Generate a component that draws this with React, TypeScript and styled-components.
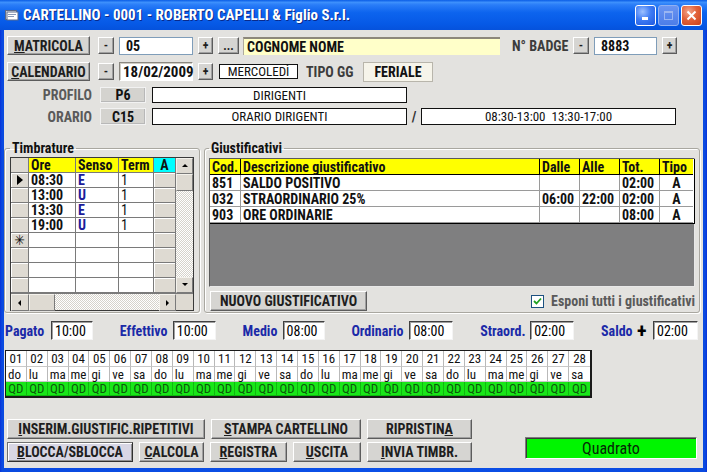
import React from "react";
import styled, { createGlobalStyle } from "styled-components";

const FONT = `"Roboto Condensed", "Liberation Sans Narrow", "Arial Narrow", "DejaVu Sans Condensed", "Liberation Sans", Arial, sans-serif`;

const GlobalStyle = createGlobalStyle`
  * { box-sizing: border-box; }
  html, body { margin: 0; padding: 0; }
  body { font-family: ${FONT}; background: #ffffff; }
`;

const Window = styled.div`
  width: 707px;
  height: 472px;
  display: flex;
  flex-direction: column;
  background: linear-gradient(90deg, #0831d9 0, #0a4ae0 2px, #0b50e8 50%, #0a4ae0 calc(100% - 2px), #0831d9 100%);
  overflow: hidden;
`;

const TitleBar = styled.div`
  height: 30px;
  flex-shrink: 0;
  display: flex;
  align-items: center;
  padding: 0 5px 0 5px;
  background: linear-gradient(180deg, #0a5de6 0%, #3d90fc 8%, #2a7df8 16%, #0d64ee 42%, #0659e6 80%, #0552dc 100%);
`;

const TitleText = styled.div`
  flex: 1;
  margin-left: 4px;
  color: #ffffff;
  font-weight: bold;
  font-size: 15px;
  text-shadow: 1px 1px 0 #0a2a8a;
  white-space: nowrap;
`;

const Controls = styled.div`
  display: flex;
  gap: 2px;
  margin-top: 1px;
`;

const CtrlBtn = styled.div<{ $kind: "min" | "max" | "close" }>`
  width: 21px;
  height: 21px;
  border-radius: 3px;
  border: 1px solid ${(p) => (p.$kind === "max" ? "#8fb0f3" : "#ffffff")};
  display: flex;
  align-items: center;
  justify-content: center;
  background: ${(p) =>
    p.$kind === "close"
      ? "radial-gradient(circle at 35% 30%, #f2a58c 0%, #e2623a 45%, #c8401c 100%)"
      : p.$kind === "max"
      ? "linear-gradient(180deg, #6b95f2 0%, #4c7de8 100%)"
      : "radial-gradient(circle at 35% 30%, #9cc0ff 0%, #3f7cf4 45%, #1c58e0 100%)"};
`;

const Body = styled.div`
  flex: 1;
  margin: 0 4px 4px 4px;
  background: #e3e2df;
  display: flex;
  flex-direction: column;
  padding-top: 6px;
`;

const Top = styled.div`
  display: flex;
  flex-direction: column;
  padding-left: 3px;
`;

const Row = styled.div<{ $h: number; $mt?: number }>`
  display: flex;
  align-items: center;
  height: ${(p) => p.$h}px;
  margin-top: ${(p) => p.$mt ?? 0}px;
`;

const Gap = styled.span<{ $w: number }>`
  width: ${(p) => p.$w}px;
  flex-shrink: 0;
`;

const Btn = styled.button<{ $w: number; $h?: number; $focus?: boolean }>`
  width: ${(p) => p.$w}px;
  height: ${(p) => p.$h ?? 20}px;
  flex-shrink: 0;
  margin: 0;
  padding: 0;
  font-family: ${FONT};
  font-weight: bold;
  font-size: 14px;
  color: #1e1e1e;
  background: ${(p) => (p.$focus ? "#d8d6e4" : "#d6d5d2")};
  border: 1px solid;
  border-color: ${(p) => (p.$focus ? "#707070 #303030 #303030 #707070" : "#ffffff #5c5c5c #5c5c5c #ffffff")};
  box-shadow: ${(p) => (p.$focus ? "inset 1px 1px #ffffff, inset -1px -1px #909090" : "inset -1px -1px #a0a0a0")};
  display: flex;
  align-items: center;
  justify-content: center;
  white-space: nowrap;
  u { text-decoration: underline; text-underline-offset: 1px; }
`;

const SmallBtn = styled(Btn)`
  font-size: 12px;
`;

const XPInput = styled.div<{ $w: number; $h?: number }>`
  width: ${(p) => p.$w}px;
  height: ${(p) => p.$h ?? 18}px;
  flex-shrink: 0;
  background: #ffffff;
  border: 1px solid #7f9db9;
  font-weight: bold;
  font-size: 14px;
  color: #111;
  padding-left: 6px;
  display: flex;
  align-items: center;
`;

const SunkenInput = styled(XPInput)`
  border: 1px solid;
  border-color: #8a8780 #ffffff #ffffff #8a8780;
  box-shadow: inset 1px 1px #d0cdc5;
  padding-left: 3px;
  font-size: 15px;
`;

const NameField = styled.div`
  width: 257px;
  height: 18px;
  flex-shrink: 0;
  background: #ffffc9;
  border-top: 2px solid #8c877b;
  border-left: 1px solid #b0ab9e;
  font-weight: bold;
  font-size: 14px;
  color: #111;
  padding-left: 3px;
  display: flex;
  align-items: center;
`;

const FieldLabel = styled.span<{ $w: number }>`
  width: ${(p) => p.$w}px;
  flex-shrink: 0;
  font-weight: bold;
  font-size: 14px;
  color: #3c3c3c;
  white-space: nowrap;
`;

const PlainBox = styled.div<{ $w: number; $h: number }>`
  width: ${(p) => p.$w}px;
  height: ${(p) => p.$h}px;
  flex-shrink: 0;
  background: #ffffff;
  border: 1px solid #111;
  font-size: 13px;
  color: #111;
  display: flex;
  align-items: center;
  justify-content: center;
  white-space: nowrap;
`;

const TypeBox = styled.div`
  width: 70px;
  height: 20px;
  flex-shrink: 0;
  background: #f6f4ea;
  border: 1px solid #b8b5ab;
  font-weight: bold;
  font-size: 14px;
  color: #111;
  display: flex;
  align-items: center;
  justify-content: center;
`;

const SideLabel = styled.span`
  width: 89px;
  flex-shrink: 0;
  text-align: right;
  padding-right: 4px;
  font-weight: bold;
  font-size: 14px;
  color: #5a5a5a;
`;

const CodeBox = styled.div`
  width: 46px;
  height: 100%;
  flex-shrink: 0;
  background: #d4d3cf;
  border: 1px solid #f2f2f2;
  box-shadow: inset -1px -1px #b8b8b8;
  font-weight: bold;
  font-size: 14px;
  color: #111;
  display: flex;
  align-items: center;
  justify-content: center;
`;

const Slash = styled.span`
  width: 14px;
  flex-shrink: 0;
  text-align: center;
  font-weight: bold;
  font-size: 14px;
  color: #333;
`;

/* ---------- group boxes ---------- */
const GroupRow = styled.div`
  display: flex;
  gap: 4px;
  margin-top: 17px;
  height: 171px;
`;

const Group = styled.fieldset<{ $w: number; $pl: number; $pt: number }>`
  width: ${(p) => p.$w}px;
  height: 171px;
  margin: 0;
  padding: ${(p) => p.$pt}px 0 0 ${(p) => p.$pl}px;
  border: 1px solid #a9a7a0;
  border-radius: 3px;
  box-shadow: inset 1px 1px #ffffff, 1px 1px #ffffff;
  min-width: 0;
`;

const Legend = styled.legend`
  padding: 0 2px;
  font-weight: bold;
  font-size: 14px;
  line-height: 13px;
  color: #111;
`;

/* Timbrature grid */
const TGrid = styled.div`
  width: 184px;
  height: 154px;
  border: 1px solid #3a3a3a;
  display: flex;
  flex-direction: column;
  background: #ffffff;
`;

const TMain = styled.div`
  display: flex;
  height: 135px;
`;

const TTable = styled.div`
  display: grid;
  grid-template-columns: 18px 47px 43px 35px 22px;
  grid-auto-rows: 15px;
  width: 165px;
`;

const TCell = styled.div<{ $kind: "corner" | "rowhead" | "head" | "headA" | "data" | "btn" }>`
  border-right: 1px solid #7a7a7a;
  border-bottom: 1px solid #7a7a7a;
  display: flex;
  align-items: center;
  justify-content: ${(p) => (p.$kind === "rowhead" || p.$kind === "headA" ? "center" : "flex-start")};
  padding-left: ${(p) => (p.$kind === "data" || p.$kind === "head" ? "2px" : "0")};
  font-size: 14px;
  font-weight: bold;
  color: #111;
  background: ${(p) =>
    p.$kind === "head"
      ? "#ffff00"
      : p.$kind === "headA"
      ? "#00ffff"
      : p.$kind === "corner" || p.$kind === "rowhead" || p.$kind === "btn"
      ? "#dedad2"
      : "#ffffff"};
  box-shadow: ${(p) => (p.$kind === "rowhead" || p.$kind === "btn" ? "inset 1px 1px #ffffff" : "none")};
  line-height: 13px;
  white-space: nowrap;
`;

const Senso = styled.span`
  color: #1c1c9a;
`;

const Plain = styled.span`
  font-weight: normal;
`;

const Track = styled.div`
  background: repeating-conic-gradient(#d6d3cb 0 25%, #ffffff 0 50%) 0 0 / 2px 2px;
`;

const VScroll = styled(Track)`
  width: 17px;
  display: flex;
  flex-direction: column;
`;

const HScrollRow = styled.div`
  display: flex;
  height: 17px;
  border-top: 1px solid #7a7a7a;
`;

const HScroll = styled(Track)`
  flex: 1;
  display: flex;
`;

const ScrollPart = styled.div<{ $w: number; $h: number }>`
  width: ${(p) => p.$w}px;
  height: ${(p) => p.$h}px;
  flex-shrink: 0;
  background: #dedad2;
  border: 1px solid;
  border-color: #f4f2ec #7a7a7a #7a7a7a #f4f2ec;
  display: flex;
  align-items: center;
  justify-content: center;
`;

const ScrollFill = styled.div`
  flex: 1;
`;

const Corner = styled.div`
  width: 17px;
  background: #dedad2;
`;

/* Giustificativi */
const JBox = styled.div`
  width: 486px;
  height: 129px;
  background: #7f7f80;
  border: 1px solid;
  border-color: #5a5a5a #e8e8e8 #e8e8e8 #5a5a5a;
`;

const JTable = styled.div`
  display: grid;
  grid-template-columns: 31px 299px 40px 40px 40px 33px;
  grid-auto-rows: 16px;
  width: 485px;
  border: 1px solid #000;
  border-top: none;
  border-left: none;
  background: #ffffff;
`;

const JCell = styled.div<{ $head?: boolean; $center?: boolean }>`
  border-right: 1px solid ${(p) => (p.$head ? "#000" : "#9a9a9a")};
  border-bottom: 1px solid ${(p) => (p.$head ? "#000" : "#9a9a9a")};
  background: ${(p) => (p.$head ? "#ffff00" : "#ffffff")};
  font-weight: bold;
  font-size: 14px;
  line-height: 14px;
  color: #111;
  display: flex;
  align-items: center;
  justify-content: ${(p) => (p.$center ? "center" : "flex-start")};
  padding-left: ${(p) => (p.$center ? "0" : "2px")};
  white-space: nowrap;
  &:nth-child(6n) { border-right: none; }
`;

const JBar = styled.div`
  display: flex;
  align-items: center;
  justify-content: space-between;
  margin-top: 4px;
  width: 486px;
  padding-left: 1px;
`;

const CheckWrap = styled.div`
  display: flex;
  align-items: center;
  gap: 7px;
  font-weight: bold;
  font-size: 14px;
  color: #5a5a5a;
`;

const CheckBox = styled.span`
  width: 13px;
  height: 13px;
  background: #ffffff;
  border: 1px solid #1c5180;
  display: flex;
  align-items: center;
  justify-content: center;
`;

/* Totals */
const TotalsRow = styled.div`
  display: flex;
  justify-content: space-between;
  align-items: center;
  height: 19px;
  margin-top: 8px;
  padding: 0 5px 0 1px;
`;

const TotalGroup = styled.div<{ $w: number }>`
  width: ${(p) => p.$w}px;
  display: flex;
  align-items: center;
  justify-content: space-between;
`;

const TotalLabel = styled.span`
  font-weight: bold;
  font-size: 14px;
  color: #1b2aa8;
  white-space: nowrap;
`;

const PlusSign = styled.span`
  font-weight: bold;
  font-size: 20px;
  line-height: 16px;
  color: #000;
  margin: 0 4px 0 2px;
`;

const TotalInput = styled.div<{ $w: number }>`
  width: ${(p) => p.$w}px;
  height: 19px;
  background: #ffffff;
  border: 1px solid;
  border-color: #404040 #f4f4f4 #f4f4f4 #404040;
  box-shadow: inset 1px 1px #a0a0a0;
  font-size: 14px;
  color: #000;
  padding-left: 3px;
  display: flex;
  align-items: center;
`;

/* Calendar */
const Calendar = styled.div`
  width: 587px;
  height: 48px;
  margin: 10px 0 0 1px;
  border: 2px solid #1a1a1a;
  border-top-width: 1px;
  border-left-width: 1px;
  display: grid;
  grid-template-columns: repeat(28, 1fr);
  grid-template-rows: 16px 15px 1fr;
`;

const CalCell = styled.div<{ $row: "num" | "day" | "qd" }>`
  font-size: 13px;
  line-height: 1;
  display: flex;
  align-items: center;
  justify-content: ${(p) => (p.$row === "day" ? "flex-start" : "center")};
  padding-left: ${(p) => (p.$row === "day" ? "2px" : "0")};
  color: ${(p) => (p.$row === "qd" ? "#0b5a0b" : "#111")};
  background: ${(p) => (p.$row === "qd" ? "#19e619" : "#ffffff")};
  border-right: 1px solid ${(p) => (p.$row === "qd" ? "#0fb80f" : "#b9b9b9")};
  border-bottom: 1px solid ${(p) => (p.$row === "qd" ? "#0fb80f" : "#c9c9c9")};
  &:nth-child(28n) { border-right: none; }
`;

/* Bottom */
const Bottom = styled.div`
  display: flex;
  margin-top: 21px;
  padding-left: 3px;
`;

const BtnRows = styled.div`
  display: flex;
  flex-direction: column;
  gap: 3px;
`;

const BtnRow = styled.div`
  display: flex;
  gap: 6px;
`;

const Status = styled.div`
  width: 172px;
  height: 22px;
  margin: 18px 0 0 53px;
  background: #00f500;
  border: 1px solid;
  border-color: #7c7c7c #ffffff #ffffff #7c7c7c;
  box-shadow: inset 1px 1px #3a3a3a;
  font-size: 16px;
  color: #062806;
  display: flex;
  align-items: center;
  justify-content: center;
`;

const Arrow: React.FC<{ dir: "up" | "down" | "left" | "right" }> = ({ dir }) => {
  const pts =
    dir === "up"
      ? "1,5 4,2 7,5"
      : dir === "down"
      ? "1,2 4,5 7,2"
      : dir === "left"
      ? "5,1 2,4 5,7"
      : "2,1 5,4 2,7";
  return (
    <svg width="8" height="8" viewBox="0 0 8 8">
      <polygon points={pts} fill="#000" />
    </svg>
  );
};

const tRows = [
  { ind: "▶", ore: "08:30", senso: "E", term: "1" },
  { ind: "", ore: "13:00", senso: "U", term: "1" },
  { ind: "", ore: "13:30", senso: "E", term: "1" },
  { ind: "", ore: "19:00", senso: "U", term: "1" },
  { ind: "*", ore: "", senso: "", term: "" },
  { ind: "", ore: "", senso: "", term: "" },
  { ind: "", ore: "", senso: "", term: "" },
  { ind: "", ore: "", senso: "", term: "" },
];

const jRows = [
  ["851", "SALDO POSITIVO", "", "", "02:00", "A"],
  ["032", "STRAORDINARIO 25%", "06:00", "22:00", "02:00", "A"],
  ["903", "ORE ORDINARIE", "", "", "08:00", "A"],
];

const days = ["do", "lu", "ma", "me", "gi", "ve", "sa"];
const cal = Array.from({ length: 28 }, (_, i) => ({
  n: String(i + 1).padStart(2, "0"),
  d: days[i % 7],
}));

export default function App() {
  return (
    <>
      <GlobalStyle />
      <Window>
        <TitleBar>
          <svg width="14" height="12" viewBox="0 0 14 12">
            <rect x="0.5" y="1.5" width="11" height="9" fill="#e8e8e8" stroke="#5a6a8a" />
            <rect x="2" y="3" width="11" height="8" fill="#ffffff" stroke="#5a6a8a" />
            <rect x="3" y="5" width="8" height="1" fill="#8a9ab8" />
            <rect x="3" y="7" width="6" height="1" fill="#8a9ab8" />
          </svg>
          <TitleText>CARTELLINO - 0001 - ROBERTO CAPELLI &amp; Figlio S.r.l.</TitleText>
          <Controls>
            <CtrlBtn $kind="min">
              <svg width="11" height="11" viewBox="0 0 11 11">
                <rect x="2" y="7" width="6" height="3" fill="#fff" />
              </svg>
            </CtrlBtn>
            <CtrlBtn $kind="max">
              <svg width="11" height="11" viewBox="0 0 11 11">
                <rect x="1.5" y="1.5" width="8" height="8" fill="none" stroke="#9ab6f2" />
                <rect x="1" y="1" width="9" height="2" fill="#9ab6f2" />
              </svg>
            </CtrlBtn>
            <CtrlBtn $kind="close">
              <svg width="11" height="11" viewBox="0 0 11 11">
                <path d="M1.5 1.5 L9.5 9.5 M9.5 1.5 L1.5 9.5" stroke="#fff" strokeWidth="2" />
              </svg>
            </CtrlBtn>
          </Controls>
        </TitleBar>

        <Body>
          <Top>
            <Row $h={19}>
              <Btn $w={83} $h={19}>
                <u>M</u>ATRICOLA
              </Btn>
              <Gap $w={8} />
              <SmallBtn $w={16} $h={17}>-</SmallBtn>
              <Gap $w={5} />
              <XPInput $w={74}>05</XPInput>
              <Gap $w={5} />
              <SmallBtn $w={15} $h={17}>+</SmallBtn>
              <Gap $w={5} />
              <SmallBtn $w={21} $h={17}>...</SmallBtn>
              <Gap $w={4} />
              <NameField>COGNOME NOME</NameField>
              <Gap $w={12} />
              <FieldLabel $w={61}>N° BADGE</FieldLabel>
              <SmallBtn $w={16} $h={17}>-</SmallBtn>
              <Gap $w={5} />
              <XPInput $w={63}>8883</XPInput>
              <Gap $w={5} />
              <SmallBtn $w={15} $h={17}>+</SmallBtn>
            </Row>

            <Row $h={21} $mt={6}>
              <Btn $w={83} $h={19}>
                <u>C</u>ALENDARIO
              </Btn>
              <Gap $w={8} />
              <SmallBtn $w={16} $h={17}>-</SmallBtn>
              <Gap $w={5} />
              <SunkenInput $w={74} $h={19}>18/02/2009</SunkenInput>
              <Gap $w={5} />
              <SmallBtn $w={15} $h={17}>+</SmallBtn>
              <Gap $w={6} />
              <PlainBox $w={79} $h={15}>MERCOLEDÌ</PlainBox>
              <Gap $w={8} />
              <FieldLabel $w={57}>TIPO GG</FieldLabel>
              <TypeBox>FERIALE</TypeBox>
            </Row>

            <Row $h={16} $mt={5}>
              <SideLabel>PROFILO</SideLabel>
              <Gap $w={4} />
              <CodeBox>P6</CodeBox>
              <Gap $w={6} />
              <PlainBox $w={255} $h={16}>DIRIGENTI</PlainBox>
            </Row>

            <Row $h={17} $mt={5}>
              <SideLabel>ORARIO</SideLabel>
              <Gap $w={4} />
              <CodeBox>C15</CodeBox>
              <Gap $w={6} />
              <PlainBox $w={255} $h={17}>ORARIO DIRIGENTI</PlainBox>
              <Slash>/</Slash>
              <PlainBox $w={255} $h={17}>08:30-13:00&nbsp;&nbsp;13:30-17:00</PlainBox>
            </Row>
          </Top>

          <GroupRow>
            <Group $w={196} $pl={5} $pt={2}>
              <Legend>Timbrature</Legend>
              <TGrid>
                <TMain>
                  <TTable>
                    <TCell $kind="corner" />
                    <TCell $kind="head">Ore</TCell>
                    <TCell $kind="head">Senso</TCell>
                    <TCell $kind="head">Term</TCell>
                    <TCell $kind="headA">A</TCell>
                    {tRows.map((r, i) => (
                      <React.Fragment key={i}>
                        <TCell $kind="rowhead">
                          {r.ind === "▶" ? (
                            <svg width="8" height="10" viewBox="0 0 8 10">
                              <polygon points="1,0 7,5 1,10" fill="#000" />
                            </svg>
                          ) : r.ind === "*" ? (
                            <Plain>✳</Plain>
                          ) : null}
                        </TCell>
                        <TCell $kind="data">{r.ore}</TCell>
                        <TCell $kind="data">
                          <Senso>{r.senso}</Senso>
                        </TCell>
                        <TCell $kind="data">
                          <Plain>{r.term}</Plain>
                        </TCell>
                        <TCell $kind="btn" />
                      </React.Fragment>
                    ))}
                  </TTable>
                  <VScroll>
                    <ScrollPart $w={17} $h={16}>
                      <Arrow dir="up" />
                    </ScrollPart>
                    <ScrollPart $w={17} $h={17} />
                    <ScrollFill />
                    <ScrollPart $w={17} $h={16}>
                      <Arrow dir="down" />
                    </ScrollPart>
                  </VScroll>
                </TMain>
                <HScrollRow>
                  <HScroll>
                    <ScrollPart $w={18} $h={17}>
                      <Arrow dir="left" />
                    </ScrollPart>
                    <ScrollPart $w={26} $h={17} />
                    <ScrollFill />
                    <ScrollPart $w={17} $h={17}>
                      <Arrow dir="right" />
                    </ScrollPart>
                  </HScroll>
                  <Corner />
                </HScrollRow>
              </TGrid>
            </Group>

            <Group $w={496} $pl={4} $pt={3}>
              <Legend>Giustificativi</Legend>
              <JBox>
                <JTable>
                  <JCell $head>Cod.</JCell>
                  <JCell $head>Descrizione giustificativo</JCell>
                  <JCell $head>Dalle</JCell>
                  <JCell $head>Alle</JCell>
                  <JCell $head>Tot.</JCell>
                  <JCell $head>Tipo</JCell>
                  {jRows.map((r, i) =>
                    r.map((c, j) => (
                      <JCell key={`${i}-${j}`} $center={j === 5}>
                        {c}
                      </JCell>
                    ))
                  )}
                </JTable>
              </JBox>
              <JBar>
                <Btn $w={157} $h={20}>NUOVO GIUSTIFICATIVO</Btn>
                <CheckWrap>
                  <CheckBox>
                    <svg width="9" height="9" viewBox="0 0 9 9">
                      <path d="M1 4 L3.5 6.5 L8 1.5" stroke="#21a121" strokeWidth="1.8" fill="none" />
                    </svg>
                  </CheckBox>
                  Esponi tutti i giustificativi
                </CheckWrap>
              </JBar>
            </Group>
          </GroupRow>

          <TotalsRow>
            <TotalGroup $w={88}>
              <TotalLabel>Pagato</TotalLabel>
              <TotalInput $w={42}>10:00</TotalInput>
            </TotalGroup>
            <TotalGroup $w={96}>
              <TotalLabel>Effettivo</TotalLabel>
              <TotalInput $w={43}>10:00</TotalInput>
            </TotalGroup>
            <TotalGroup $w={82}>
              <TotalLabel>Medio</TotalLabel>
              <TotalInput $w={42}>08:00</TotalInput>
            </TotalGroup>
            <TotalGroup $w={102}>
              <TotalLabel>Ordinario</TotalLabel>
              <TotalInput $w={44}>08:00</TotalInput>
            </TotalGroup>
            <TotalGroup $w={94}>
              <TotalLabel>Straord.</TotalLabel>
              <TotalInput $w={44}>02:00</TotalInput>
            </TotalGroup>
            <TotalGroup $w={97}>
              <TotalLabel>Saldo</TotalLabel>
              <PlusSign>+</PlusSign>
              <TotalInput $w={45}>02:00</TotalInput>
            </TotalGroup>
          </TotalsRow>

          <Calendar>
            {cal.map((c) => (
              <CalCell key={`n${c.n}`} $row="num">
                {c.n}
              </CalCell>
            ))}
            {cal.map((c) => (
              <CalCell key={`d${c.n}`} $row="day">
                {c.d}
              </CalCell>
            ))}
            {cal.map((c) => (
              <CalCell key={`q${c.n}`} $row="qd">
                QD
              </CalCell>
            ))}
          </Calendar>

          <Bottom>
            <BtnRows>
              <BtnRow>
                <Btn $w={198}>
                  <u>I</u>NSERIM.GIUSTIFIC.RIPETITIVI
                </Btn>
                <Btn $w={150}>
                  <u>S</u>TAMPA CARTELLINO
                </Btn>
                <Btn $w={105}>
                  RIPRISTIN<u>A</u>
                </Btn>
              </BtnRow>
              <BtnRow>
                <Btn $w={126} $focus>
                  <u>B</u>LOCCA/SBLOCCA
                </Btn>
                <Btn $w={65}>
                  <u>C</u>ALCOLA
                </Btn>
                <Btn $w={77}>
                  <u>R</u>EGISTRA
                </Btn>
                <Btn $w={68}>
                  <u>U</u>SCITA
                </Btn>
                <Btn $w={105}>
                  <u>I</u>NVIA TIMBR.
                </Btn>
              </BtnRow>
            </BtnRows>
            <Status>Quadrato</Status>
          </Bottom>
        </Body>
      </Window>
    </>
  );
}
